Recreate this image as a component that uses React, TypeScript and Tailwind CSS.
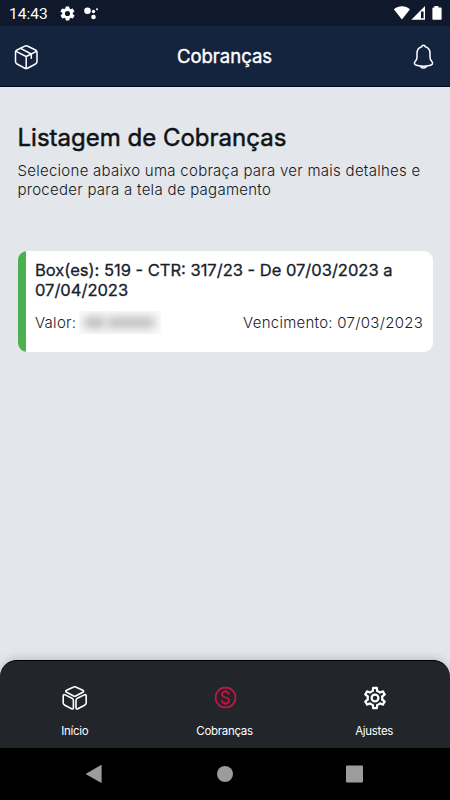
import type { ReactNode } from "react";

function StatusBar() {
  return (
    <div className="flex h-[26px] items-center bg-[#10192b] pl-[9px] pr-[8px] text-white">
      <span className="w-[50px] pt-[2px] font-['Roboto',sans-serif] text-[15.500px] leading-[26px]">14:43</span>
      <svg className="h-[17px] w-[17px]" viewBox="0 0 24 24" fill="currentColor">
        <path d="M19.4 13c0-.3.1-.6.1-1s0-.7-.1-1l2.1-1.6c.2-.2.3-.4.1-.7l-2-3.400c-.1-.2-.4-.3-.6-.2l-2.500 1a7.500 7.500 0 0 0-1.700-1l-.4-2.600a.5.5 0 0 0-.5-.4h-4c-.2 0-.5.2-.5.4l-.4 2.600c-.6.3-1.200.6-1.700 1l-2.500-1c-.2-.1-.5 0-.6.2l-2 3.400c-.1.2-.1.5.1.7L4.600 11c0 .3-.1.6-.1 1s0 .7.1 1l-2.100 1.600c-.2.2-.3.4-.1.7l2 3.400c.1.2.4.3.6.2l2.500-1c.5.4 1.100.8 1.700 1l.4 2.600c0 .2.2.4.5.4h4c.2 0 .5-.2.5-.4l.4-2.600c.6-.3 1.200-.6 1.700-1l2.500 1c.2.1.5 0 .6-.2l2-3.400c.1-.2.1-.5-.1-.7L19.400 13ZM12 15.600a3.600 3.600 0 1 1 0-7.200 3.600 3.600 0 0 1 0 7.200Z" />
      </svg>
      <svg className="ml-[8px] h-[14px] w-[16px]" viewBox="0 0 16 14" fill="currentColor">
        <circle cx="3.500" cy="4.700" r="3.300" />
        <circle cx="9.500" cy="5.500" r="1.700" />
        <circle cx="9.500" cy="11" r="2.300" />
        <circle cx="13" cy="3.200" r="1" />
      </svg>
      <svg className="ml-auto h-[16px] w-[50px]" viewBox="0 0 50 16" fill="currentColor">
        <path d="M1.800 4.300C6.500.3 13.500.3 18 4.300L9.900 14.400Z" />
        <path fillRule="evenodd" d="M19.300 14.800 33 1v13.800ZM29 6.500v6.800h2.600V6.500Z" />
        <path d="M42.400 1h4v1.500h2.200c.7 0 1 .4 1 1v10.300c0 .6-.3 1-1 1h-7.200c-.6 0-1-.4-1-1V3.500c0-.6.4-1 1-1h1Z" />
      </svg>
    </div>
  );
}

function Header() {
  return (
    <header className="flex h-[61px] items-center justify-between border-b border-[#050823] bg-[#15243e] pl-[14px] pr-[16px] text-white">
      <svg className="mt-px h-[26px] w-[25px]" viewBox="0 0 25 26" fill="none" stroke="currentColor" strokeWidth="1.500" strokeLinejoin="round" strokeLinecap="round">
        <path d="M10.800 2.200Q12.300 1.500 13.800 2.200L21.500 6Q23 6.800 23 8.500V17.500Q23 19.200 21.500 20L14 24Q12.200 24.900 10.500 24L3 20Q1.500 19.200 1.500 17.500V8.500Q1.500 6.800 3 6Z" />
        <path d="M2 7.300 12.200 12.500 22.500 7.300M12.200 12.500V24.400M6.600 4.400 17.300 10V14.300" />
      </svg>
      <h1 className="mr-[3px] pb-px font-['Inter',sans-serif] text-[18.500px] font-normal leading-6 [-webkit-text-stroke:0.4px_white]">Cobranças</h1>
      <svg className="mt-[2px] h-[26px] w-[21px]" viewBox="0 0 21 26" fill="none" stroke="currentColor" strokeWidth="1.500" strokeLinejoin="round" strokeLinecap="round">
        <path d="M8.800 2.800C8.800.8 12.200.8 12.200 2.800 15.500 3.600 17 6 17 9.500V13.200Q17 15.500 18.700 17.200C20.600 19.300 19.200 20.700 17.500 21.200Q10.500 23.200 3.500 21.200C1.800 20.700.4 19.300 2.300 17.200Q4 15.500 4 13.200V9.500C4 6 5.500 3.600 8.800 2.800Z" />
        <path d="M7.500 22.300C8.200 24.600 12.800 24.600 13.500 22.300" />
      </svg>
    </header>
  );
}

function ChargeCard() {
  return (
    <article className="mt-[52px] flex h-[101px] overflow-hidden rounded-[9px] bg-white text-[#17212c]">
      <div className="w-[8.500px] shrink-0 bg-[#4caf50]" />
      <div className="flex-1 pl-[9px] pr-[9.500px] pt-[10px]">
        <h3 className="text-[16.500px] font-normal leading-[19.500px] [-webkit-text-stroke:0.3px_#17212c]">
          Box(es): 519 - CTR: 317/23 - De 07/03/2023 a<br />07/04/2023
        </h3>
        <div className="mt-[11px] flex items-center text-[15px] font-light leading-[20px] tracking-[0.270px]">
          <span>Valor:</span>
          <span className="ml-[3px] flex h-[23px] w-[82px] items-center gap-[2px] overflow-hidden bg-[#fafafa] pl-[5px]">
            <span className="h-[11px] w-[21px] rounded bg-[#b8b8b8] blur-[5px]" />
            <span className="h-[11px] w-[48px] rounded bg-[#bcbcbc] blur-[5px]" />
          </span>
          <span className="ml-auto">Vencimento: 07/03/2023</span>
        </div>
      </div>
    </article>
  );
}

function Tab({ label, children }: { label: string; children: ReactNode }) {
  return (
    <div className="flex w-[150.500px] flex-col items-center pt-[23px] text-white">
      <div className="flex h-[28px] items-center justify-center">{children}</div>
      <span className="mt-[11px] text-[11.500px] leading-[16px] tracking-[-0.300px]">{label}</span>
    </div>
  );
}

function TabBar() {
  return (
    <nav className="flex h-[88px] justify-center rounded-t-[17px] border-t border-black bg-[#22262b] pr-[1px] shadow-[0_-2px_8px_rgba(0,0,0,0.16)]">
      <Tab label="Início">
        <svg className="h-[26px] w-[26px]" viewBox="0 0 26 26" fill="none" stroke="currentColor" strokeWidth="1.600" strokeLinejoin="round">
          <path d="M11.700 2Q12.700 1.500 13.700 2L20.800 5.300Q22.500 6.300 20.800 7.300L13.700 11Q12.700 11.500 11.700 11L4.600 7.300Q2.900 6.300 4.600 5.300Z" />
          <path d="M3.100 9.900 10 13.300Q11.400 14 11.400 15.500V22.500Q11.400 24.500 9.600 23.700L2.800 20.200Q1.200 19.400 1.200 17.800V11.100Q1.200 9 3.100 9.900Z" />
          <path d="M22.300 9.900 15.400 13.300Q14 14 14 15.500V22.500Q14 24.500 15.800 23.700L22.600 20.200Q24.200 19.400 24.200 17.800V11.100Q24.200 9 22.300 9.900Z" />
        </svg>
      </Tab>
      <Tab label="Cobranças">
        <svg className="h-[22px] w-[22px] -translate-y-[0.500px] translate-x-[0.500px] text-[#c01540]" viewBox="0 0 22 22" fill="none" stroke="currentColor" strokeWidth="1.800">
          <circle cx="11" cy="11" r="10" />
          <path d="M14.500 8.100C14.200 6.100 13 5.200 11 5.200 9 5.200 7.500 6.300 7.500 8.100 7.500 10 9 10.500 11 11 13.200 11.500 14.600 12.200 14.600 13.900 14.600 15.700 13 16.800 11 16.800 8.800 16.800 7.500 15.800 7.300 13.700M11 3.200V5.200M11 16.800V18.800" />
        </svg>
      </Tab>
      <Tab label="Ajustes">
        <svg className="h-[27px] w-[27px] -translate-y-[0.500px] translate-x-[0.500px]" viewBox="0 0 24 24" fill="currentColor">
          <path d="M19.430 12.980c.04-.32.07-.64.07-.98s-.03-.66-.07-.98l2.110-1.650c.19-.15.24-.42.12-.64l-2-3.460c-.12-.22-.39-.3-.61-.22l-2.490 1c-.52-.4-1.080-.73-1.690-.98l-.38-2.650C14.460 2.180 14.250 2 14 2h-4c-.25 0-.46.18-.49.42l-.38 2.650c-.61.25-1.170.59-1.690.98l-2.490-1c-.23-.09-.49 0-.61.22l-2 3.460c-.13.22-.07.49.12.64l2.110 1.650c-.04.32-.07.65-.07.98s.03.66.07.98l-2.110 1.650c-.19.15-.24.42-.12.64l2 3.460c.12.22.39.3.61.22l2.490-1c.52.4 1.080.73 1.690.98l.38 2.650c.03.24.24.42.49.42h4c.25 0 .46-.18.49-.42l.38-2.650c.61-.25 1.170-.59 1.690-.98l2.490 1c.23.09.49 0 .61-.22l2-3.460c.12-.22.07-.49-.12-.64l-2.110-1.650Zm-1.980-1.710c.04.31.05.52.05.73s-.02.43-.05.73l-.14 1.130.89.700 1.080.84-.7 1.210-1.270-.51-1.040-.42-.9.680c-.43.32-.84.56-1.250.73l-1.060.43-.16 1.130-.2 1.350h-1.400l-.35-2.480-1.060-.43c-.43-.18-.83-.41-1.230-.71l-.91-.7-1.060.43-1.270.51-.7-1.210 1.970-1.540-.14-1.130c-.03-.31-.05-.54-.05-.74s.02-.43.05-.73l.14-1.130-1.970-1.540.7-1.210 2.310.93.900-.68c.43-.32.84-.56 1.250-.73l1.060-.43.350-2.480h1.390l.35 2.480 1.060.43c.43.18.83.41 1.230.71l.91.700 2.330-.94.700 1.210-1.960 1.550ZM12 8a4 4 0 1 0 0 8 4 4 0 0 0 0-8Zm0 6a2 2 0 1 1 0-4 2 2 0 0 1 0 4Z" />
        </svg>
      </Tab>
    </nav>
  );
}

function SystemNav() {
  return (
    <div className="flex h-[52px] items-center justify-center bg-black">
      <svg className="h-[20px] w-[278px]" viewBox="0 0 278 20" fill="#9c9c9c">
        <path d="M15.600 1.500V18.500Q15.500 19 15 18.800L.4 10.400Q-.2 10 .4 9.500L15 1Q15.500.8 15.600 1.500Z" />
        <circle cx="139" cy="10" r="8" />
        <rect x="260" y="1.500" width="17" height="17" rx="1" />
      </svg>
    </div>
  );
}

export default function App() {
  return (
    <div className="flex h-[800px] w-[450px] flex-col overflow-hidden bg-[#e3e6eb] font-['Inter',sans-serif]">
      <StatusBar />
      <Header />
      <main className="flex-1 px-[17.500px] pt-[35px]">
        <h2 className="text-[24px] font-normal leading-[32px] text-[#101316] [-webkit-text-stroke:0.5px_#101316]">Listagem de Cobranças</h2>
        <p className="mt-[8px] text-[15px] font-light leading-[18.500px] tracking-[0.270px] text-[#14181c]">
          Selecione abaixo uma cobraça para ver mais detalhes e<br />proceder para a tela de pagamento
        </p>
        <ChargeCard />
      </main>
      <TabBar />
      <SystemNav />
    </div>
  );
}
